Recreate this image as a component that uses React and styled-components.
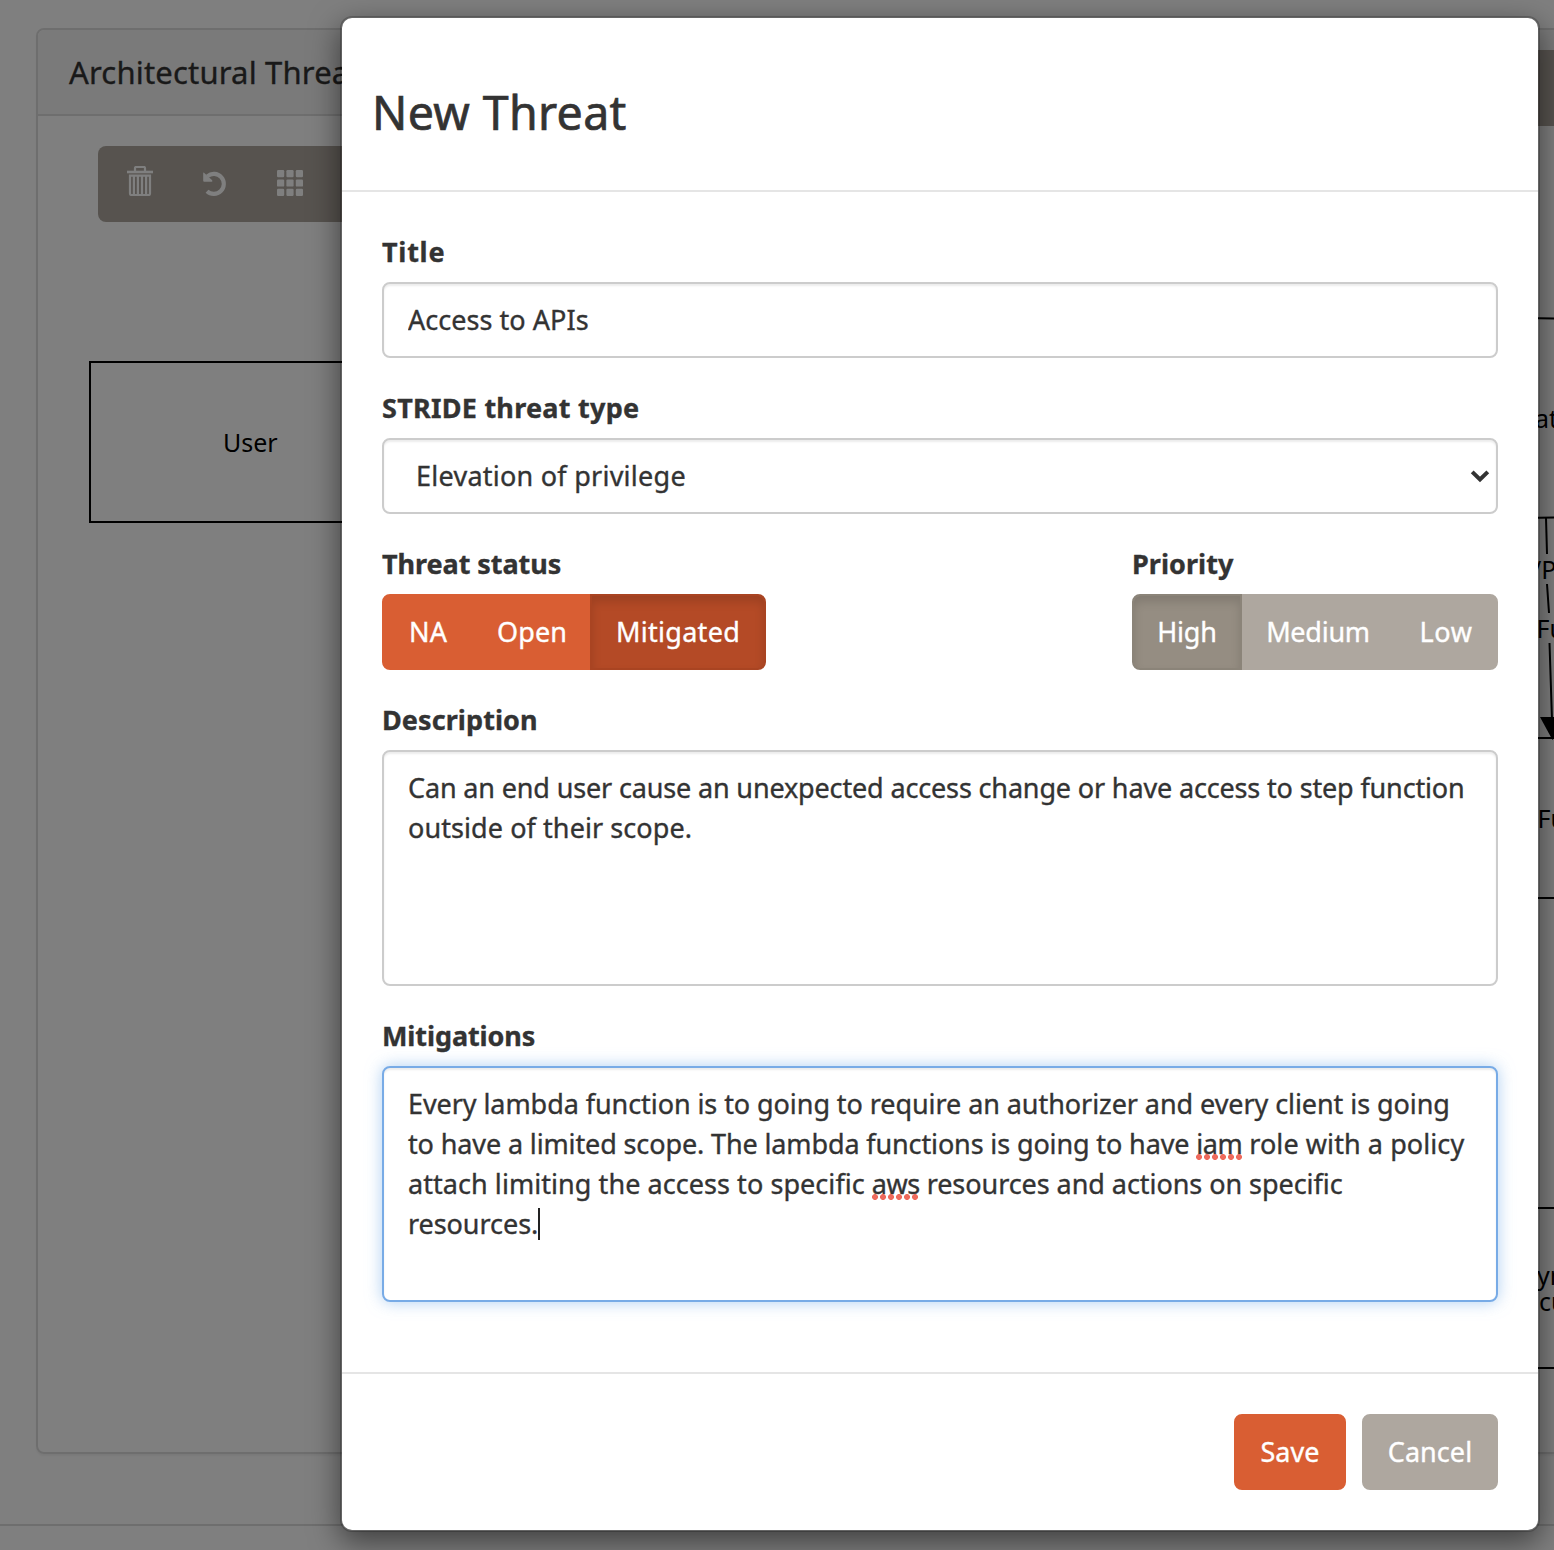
import React from "react";
import styled, { createGlobalStyle, css } from "styled-components";

const GlobalStyle = createGlobalStyle`
  *, *::before, *::after { box-sizing: border-box; }
  html, body { margin: 0; padding: 0; }
  body {
    background: #fff;
    color: #333;
    font-family: "Noto Sans", "Open Sans", sans-serif;
    font-size: 27px;
    line-height: 40px;
    overflow: hidden;
    -webkit-text-stroke: 0.35px currentColor;
  }
`;

const Page = styled.div`
  position: relative;
  width: 1554px;
  height: 1550px;
  overflow: hidden;
`;

/* ---------- page behind the dialog ---------- */

const Content = styled.main`
  height: 1526px;
  padding: 28px 0 0 36px;
  border-bottom: 2px solid #ddd;
`;

const Panel = styled.section`
  display: flex;
  flex-direction: column;
  width: 1580px;
  height: 1426px;
  border: 2px solid #ddd;
  border-radius: 8px;
  box-shadow: 0 2px 2px rgba(0, 0, 0, 0.05);
`;

const PanelHeading = styled.header`
  display: flex;
  align-items: flex-start;
  justify-content: space-between;
  flex: none;
  height: 86px;
  padding: 20px 22px 0 31px;
  background: #f5f5f5;
  border-bottom: 2px solid #ddd;
  border-radius: 6px 6px 0 0;
`;

const PanelTitle = styled.h3`
  margin: 2px 0 0;
  font-size: 31px;
  font-weight: 400;
  line-height: 40px;
  letter-spacing: 0.18px;
  white-space: nowrap;
`;

const HeadingAction = styled.div`
  width: 120px;
  height: 76px;
  background: #aea79f;
`;

const Toolbar = styled.div`
  display: flex;
  flex: none;
  width: 900px;
  height: 76px;
  margin: 30px 0 0 60px;
  padding-left: 4px;
  background: #aea79f;
  border-radius: 8px;
`;

const ToolButton = styled.span`
  display: flex;
  justify-content: center;
  width: 75px;
  padding-top: 20px;
  color: #fff;
`;

const Canvas = styled.svg`
  display: block;
  flex: none;
  font-size: 25px;
  fill: #000;
`;

/* ---------- dialog ---------- */

const Backdrop = styled.div`
  position: absolute;
  inset: 0;
  padding: 16px 0 0 340px;
  background: rgba(0, 0, 0, 0.5);
`;

const Modal = styled.div`
  display: flex;
  flex-direction: column;
  width: 1200px;
  height: 1516px;
  background: #fff;
  background-clip: padding-box;
  border: 2px solid rgba(0, 0, 0, 0.2);
  border-radius: 12px;
  box-shadow: 0 10px 30px rgba(0, 0, 0, 0.5);
`;

const ModalHeader = styled.header`
  height: 174px;
  padding: 60px 30px 0;
  border-bottom: 2px solid #e5e5e5;
`;

const ModalTitle = styled.h1`
  margin: 0;
  font-size: 46.5px;
  font-weight: 400;
  line-height: 68px;
  letter-spacing: 0.35px;
  -webkit-text-stroke-width: 0.7px;
`;

const ModalBody = styled.div`
  display: flex;
  flex-direction: column;
  gap: 30px;
  flex: 1;
  padding: 40px;
`;

const ModalFooter = styled.footer`
  display: flex;
  justify-content: flex-end;
  gap: 16px;
  padding: 40px;
  border-top: 2px solid #e5e5e5;
`;

const Field = styled.div`
  display: flex;
  flex-direction: column;
  gap: 10px;
`;

const FieldRow = styled.div`
  display: flex;
  justify-content: space-between;
`;

const Label = styled.label`
  font-weight: 700;
  letter-spacing: ${(p) => p.$track || 0}px;
`;

const control = css`
  border: 2px solid #ccc;
  border-radius: 8px;
  background: #fff;
  box-shadow: inset 0 2px 2px rgba(0, 0, 0, 0.075);
`;

const TextInput = styled.input`
  ${control}
  width: 100%;
  height: 76px;
  padding: 0 24px 2px;
  color: inherit;
  font: inherit;
  letter-spacing: 0.04px;
  outline: none;
`;

const SelectBox = styled.div`
  ${control}
  display: flex;
  align-items: center;
  justify-content: space-between;
  height: 76px;
  padding: 0 6px 0 32px;
  letter-spacing: 0.25px;
`;

const TextArea = styled.div`
  ${control}
  height: 236px;
  padding: 16px 24px;
  ${(p) =>
    p.$focused &&
    css`
      border-color: #78abe6;
      box-shadow: inset 0 2px 2px rgba(0, 0, 0, 0.075), 0 0 16px rgba(120, 175, 233, 0.6);
    `}
`;

const Line = styled.div`
  display: flex;
  height: 40px;
  white-space: pre;
`;

const Run = styled.span`
  letter-spacing: ${(p) => p.$track || 0}px;
`;

const Misspelled = styled(Run)`
  position: relative;

  &::after {
    content: "";
    position: absolute;
    left: 0;
    bottom: 4px;
    width: 47px;
    height: 6px;
    background: radial-gradient(circle at 3px 3px, #ee6a5c 2.6px, transparent 3.3px) 0 0 / 8px 6px repeat-x;
  }
`;

const Caret = styled.span`
  width: 2px;
  height: 32px;
  margin-top: 4px;
  background: #222;
`;

const tones = {
  primary: { base: "#d95e33", active: "#b44a26", edge: "#a94422" },
  muted: { base: "#aea79f", active: "#958d82", edge: "#8b8479" },
};

const Button = styled.button`
  display: flex;
  align-items: center;
  justify-content: center;
  width: ${(p) => p.$width}px;
  height: 76px;
  padding: 0 0 1px;
  border: 2px solid ${(p) => tones[p.$tone].base};
  border-radius: 8px;
  background: ${(p) => tones[p.$tone].base};
  color: #fff;
  font: inherit;
  letter-spacing: ${(p) => p.$track || 0}px;
  ${(p) =>
    p.$active &&
    css`
      z-index: 1;
      background: ${tones[p.$tone].active};
      border-color: ${tones[p.$tone].edge};
      box-shadow: inset 0 6px 10px rgba(0, 0, 0, 0.125);
    `}
`;

const ButtonGroup = styled.div`
  display: flex;

  > ${Button} {
    border-radius: 0;
  }
  > ${Button} + ${Button} {
    margin-left: -2px;
  }
  > ${Button}:first-child {
    border-radius: 8px 0 0 8px;
  }
  > ${Button}:last-child {
    border-radius: 0 8px 8px 0;
  }
`;

/* ---------- drawings ---------- */

const TrashIcon = () => (
  <svg width="26" height="30" viewBox="0 0 26 30" fill="none" stroke="currentColor">
    <path d="M8 5V2.2Q8 1 9.2 1H16.8Q18 1 18 2.2V5" strokeWidth="2.2" />
    <path d="M0 6H26" strokeWidth="2.6" />
    <path d="M3 9.6H23V27.5Q23 29 21.5 29H4.5Q3 29 3 27.5Z" strokeWidth="2.2" />
    <path d="M6.9 10V28M10.9 10V28M15 10V28M19.1 10V28" strokeWidth="2.2" />
  </svg>
);

const UndoIcon = () => (
  <svg width="26" height="32" viewBox="0 0 26 32" fill="none">
    <path d="M5.4 10.2A10 10 0 1 1 5 25.2" stroke="currentColor" strokeWidth="4.1" />
    <path d="M1.2 7Q1.2 6 2 6.8L10.2 14.2Q10.8 15.8 9.6 15.8H2.2Q1.2 15.8 1.2 14.8Z" fill="currentColor" />
  </svg>
);

const GridIcon = () => (
  <svg width="26" height="30" viewBox="0 0 26 30" fill="currentColor">
    {[0, 1, 2].map((r) =>
      [0, 1, 2].map((c) => (
        <rect key={`${r}-${c}`} x={c * 9.4} y={4 + r * 9.4} width="7.2" height="7.2" rx="1.2" />
      ))
    )}
  </svg>
);

const Chevron = () => (
  <svg width="20" height="14" viewBox="0 0 20 14" fill="none">
    <path d="M2.2 2.9L10 10.5L17.8 2.9" stroke="#333" strokeWidth="4" />
  </svg>
);

const Diagram = () => (
  <Canvas width="1516" height="1230" viewBox="38 222 1516 1230">
    <g fill="none" stroke="#000" strokeWidth="2">
      <rect x="90" y="362" width="320" height="160" />
      <path d="M1500 318Q1545 318 1580 319" />
      <path d="M1500 518Q1540 518 1580 517" />
      <path d="M1546 518L1547 554M1547 584L1549 613M1549.5 643L1552 720" />
      <path d="M1400 738H1600M1400 898H1600" />
      <path d="M1400 1208H1600M1400 1368H1600" />
    </g>
    <path d="M1540 717H1566L1552.5 740Z" />
    <text x="223" y="452">User</text>
    <text x="1535" y="428">at</text>
    <text x="1532" y="579">/P</text>
    <text x="1536.5" y="638">Fu</text>
    <text x="1537.5" y="828">Fu</text>
    <text x="1537" y="1285">yn</text>
    <text x="1539" y="1311">cu</text>
  </Canvas>
);

export default function App() {
  return (
    <Page>
      <GlobalStyle />
      <Content>
        <Panel>
          <PanelHeading>
            <PanelTitle>Architectural Threa</PanelTitle>
            <HeadingAction />
          </PanelHeading>
          <Toolbar>
            <ToolButton><TrashIcon /></ToolButton>
            <ToolButton><UndoIcon /></ToolButton>
            <ToolButton><GridIcon /></ToolButton>
          </Toolbar>
          <Diagram />
        </Panel>
      </Content>

      <Backdrop>
        <Modal role="dialog">
          <ModalHeader>
            <ModalTitle>New Threat</ModalTitle>
          </ModalHeader>
          <ModalBody>
            <Field>
              <Label $track={0.75}>Title</Label>
              <TextInput defaultValue="Access to APIs" />
            </Field>
            <Field>
              <Label $track={0.26}>STRIDE threat type</Label>
              <SelectBox>
                Elevation of privilege
                <Chevron />
              </SelectBox>
            </Field>
            <FieldRow>
              <Field>
                <Label $track={-0.06}>Threat status</Label>
                <ButtonGroup>
                  <Button $tone="primary" $width={92} $track={0}>NA</Button>
                  <Button $tone="primary" $width={120} $track={0.15}>Open</Button>
                  <Button $tone="primary" $width={176} $track={0.3} $active>Mitigated</Button>
                </ButtonGroup>
              </Field>
              <Field>
                <Label $track={0.05}>Priority</Label>
                <ButtonGroup>
                  <Button $tone="muted" $width={110} $track={-0.15} $active>High</Button>
                  <Button $tone="muted" $width={156} $track={-0.25}>Medium</Button>
                  <Button $tone="muted" $width={104} $track={0.6}>Low</Button>
                </ButtonGroup>
              </Field>
            </FieldRow>
            <Field>
              <Label $track={0.08}>Description</Label>
              <TextArea>
                <Line><Run $track={-0.152}>Can an end user cause an unexpected access change or have access to step function</Run></Line>
                <Line><Run $track={0.08}>outside of their scope.</Run></Line>
              </TextArea>
            </Field>
            <Field>
              <Label $track={-0.1}>Mitigations</Label>
              <TextArea $focused>
                <Line><Run $track={-0.07}>Every lambda function is to going to require an authorizer and every client is going</Run></Line>
                <Line>
                  <Run $track={-0.125}>to have a limited scope. The lambda functions is going to have </Run>
                  <Misspelled $track={-0.5}>iam</Misspelled>
                  <Run $track={0.08}> role with a policy</Run>
                </Line>
                <Line>
                  <Run $track={0.06}>attach limiting the access to specific </Run>
                  <Misspelled $track={-0.5}>aws</Misspelled>
                  <Run $track={-0.056}> resources and actions on specific</Run>
                </Line>
                <Line>
                  <Run $track={-0.058}>resources.</Run>
                  <Caret />
                </Line>
              </TextArea>
            </Field>
          </ModalBody>
          <ModalFooter>
            <Button $tone="primary" $width={112} $track={0}>Save</Button>
            <Button $tone="muted" $width={136} $track={0.05}>Cancel</Button>
          </ModalFooter>
        </Modal>
      </Backdrop>
    </Page>
  );
}
